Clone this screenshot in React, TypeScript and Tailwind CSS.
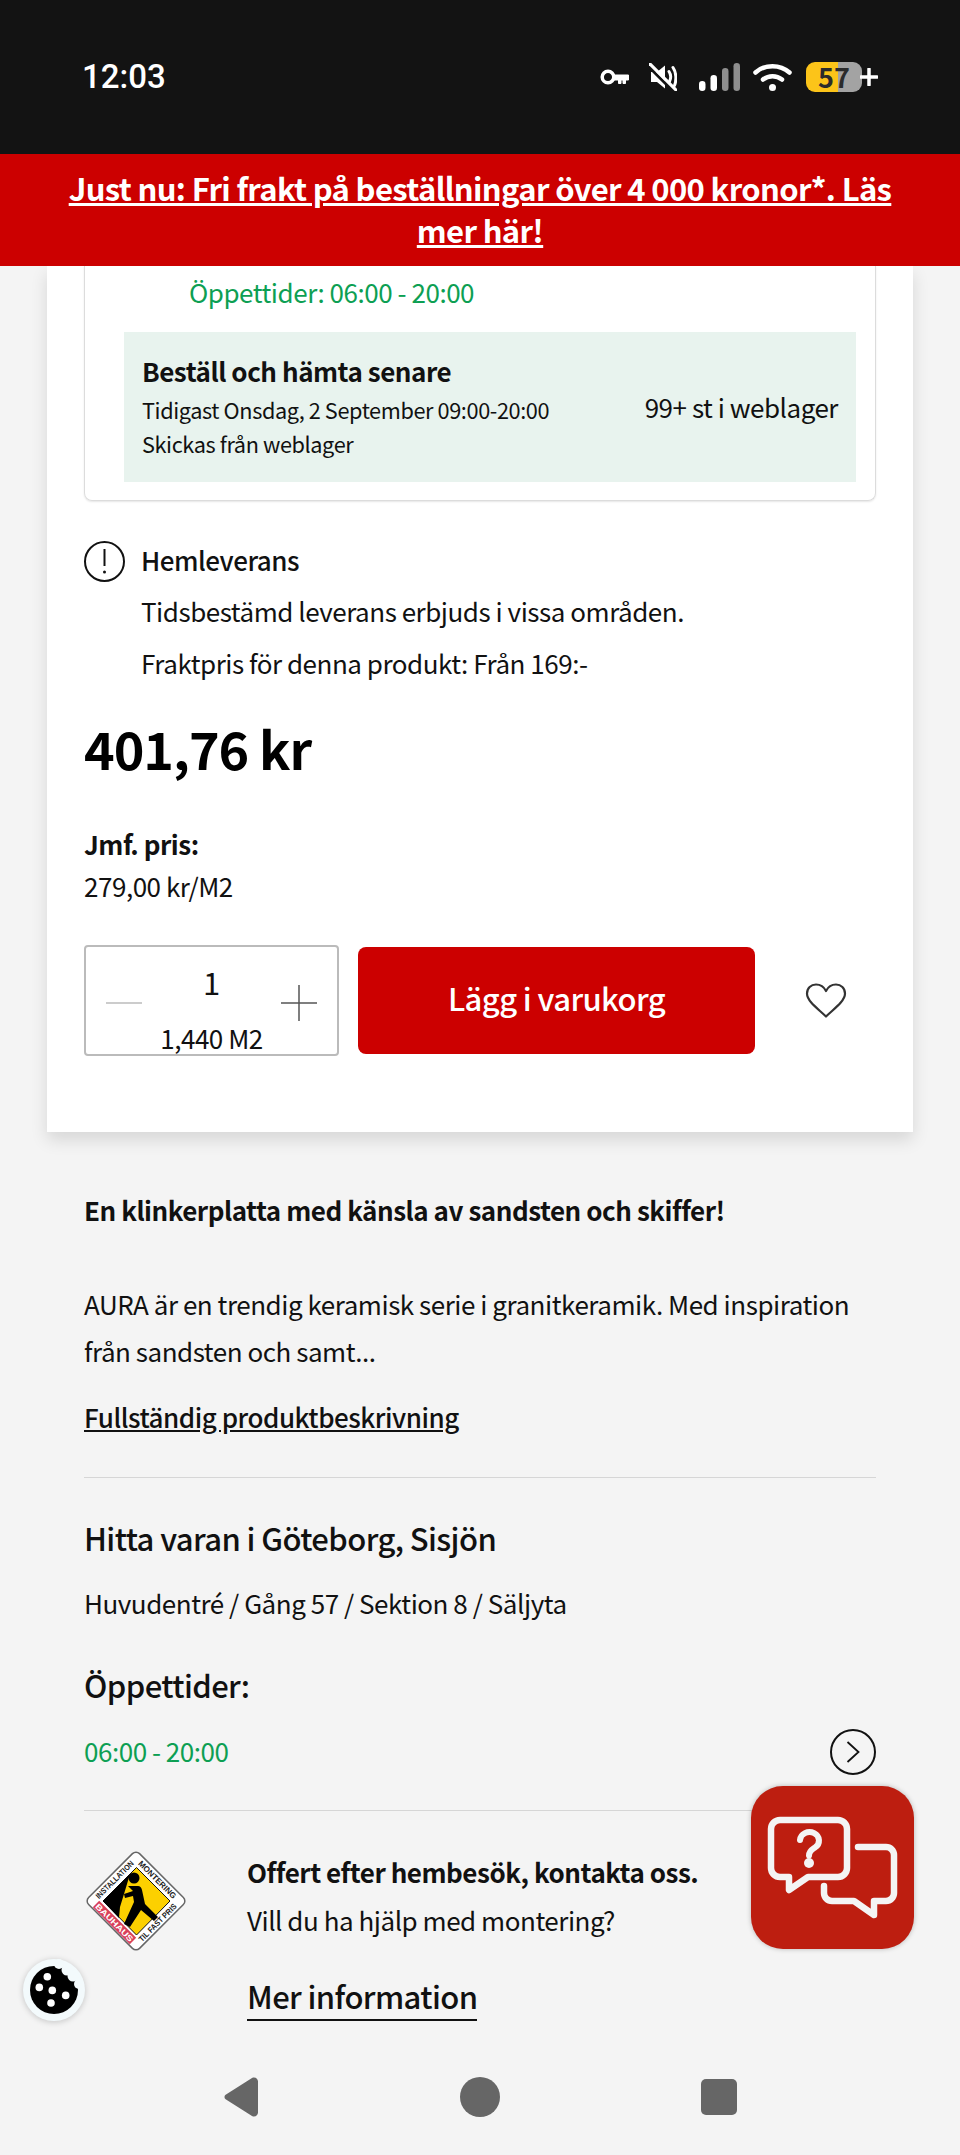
const GREEN = "text-[#0d9f53]";
const BODY = "text-[26px] leading-[40px] tracking-[-0.47px]";
const HEADING = "text-[31px] leading-[44px] tracking-[-0.6px] font-medium";
const SMALL = "text-[21.700px] leading-[34px] tracking-[-0.39px]";

const KeyIcon = () => (
  <svg width="30" height="18" viewBox="0 0 30 18" fill="none" stroke="#fff" strokeWidth="3.500">
    <circle cx="8" cy="9" r="5.800" />
    <path d="M14 7h14.500v5h-3v3.500h-2.500v-3.500h-2v3.500h-2.500v-3.500h-4.500" fill="#fff" strokeWidth="1" strokeLinejoin="round" />
  </svg>
);

const MuteIcon = () => (
  <svg width="28" height="28" viewBox="0 0 28 28" fill="none">
    <path d="M2 9h6l8-6.500v23L8 19H2z" fill="#fff" />
    <path d="M20 8.500c2 3 2 7 .5 10M24 4.500c3.500 5 3.500 13 1.500 18" stroke="#fff" strokeWidth="3" strokeLinecap="round" />
    <path d="M1 5l23 23" stroke="#131313" strokeWidth="3" />
    <path d="M1 1l26 26" stroke="#fff" strokeWidth="3.200" strokeLinecap="round" />
  </svg>
);

const SignalIcon = () => (
  <svg width="41" height="28" viewBox="0 0 41 28">
    <rect x="0" y="18" width="6.500" height="10" rx="3.200" fill="#fff" />
    <rect x="11.500" y="12" width="6.500" height="16" rx="3.200" fill="#fff" />
    <rect x="23" y="5" width="6.500" height="23" rx="3.200" fill="#8e8e8e" />
    <rect x="34.500" y="0" width="6.500" height="28" rx="3.200" fill="#8e8e8e" />
  </svg>
);

const WifiIcon = () => (
  <svg width="39" height="28" viewBox="0 0 39 28" fill="none" stroke="#fff" strokeWidth="4.500" strokeLinecap="round">
    <path d="M2.500 9.500C12 1 27 1 36.500 9.500" />
    <path d="M10 16.500c5.500-4.500 13.500-4.500 19 0" />
    <circle cx="19.500" cy="24.500" r="3.500" fill="#fff" stroke="none" />
  </svg>
);

const Heart = () => (
  <svg width="42" height="36" viewBox="0 0 42 36" fill="none" stroke="#333" strokeWidth="2.200" strokeLinejoin="round">
    <path d="M21 33.500C14 26.500 2 18.500 2 10.500 2 5 6 1.500 11 1.500c4.500 0 8 2.500 10 6.500 2-4 5.500-6.500 10-6.500 5 0 9 3.500 9 9 0 8-12 16-19 23z" />
  </svg>
);

const ChatButton = () => (
  <div className="absolute left-[751px] top-[1786px] h-[163px] w-[163px] rounded-[32px] bg-[#bd1e10] shadow-[0_0_5px_rgba(0,0,0,0.25)]">
    <svg width="163" height="163" viewBox="0 0 163 163" fill="none" stroke="#f4f4f4" strokeWidth="6.500" strokeLinejoin="round" strokeLinecap="round">
      <path d="M29 34h58a9 9 0 0 1 9 9v39a9 9 0 0 1-9 9H57l-19 13V91h-9a9 9 0 0 1-9-9V43a9 9 0 0 1 9-9z" />
      <path d="M107 61h28a8 8 0 0 1 8 8v38a8 8 0 0 1-8 8h-12v14l-20-14H81a8 8 0 0 1-8-8v-7" />
      <path d="M49 54a9.500 8.500 0 1 1 15 7.500c-3 2-6 3.500-6 8" strokeWidth="6" />
      <circle cx="58" cy="77" r="5" fill="#f4f4f4" stroke="none" />
    </svg>
  </div>
);

const CookieButton = () => (
  <div className="absolute left-[23px] top-[1959px] h-[62px] w-[62px] rounded-full bg-[#f3fafc] shadow-[0_1px_6px_rgba(0,0,0,0.2)]">
    <svg width="62" height="62" viewBox="0 0 62 62">
      <circle cx="31" cy="31" r="24" fill="#000" />
      <g fill="#f3fafc">
        <circle cx="36" cy="5" r="5" />
        <circle cx="44" cy="11" r="5.500" />
        <circle cx="50" cy="17" r="5.500" />
        <circle cx="56" cy="25" r="5" />
      </g>
      <g fill="#fff">
        <circle cx="24.300" cy="17.700" r="3.800" />
        <circle cx="16.300" cy="28.400" r="3.800" />
        <circle cx="29.300" cy="31.400" r="3.800" />
        <circle cx="42.700" cy="36.400" r="3.800" />
        <circle cx="28" cy="44" r="3.800" />
      </g>
    </svg>
  </div>
);

const MountingLogo = () => (
  <svg width="104" height="104" viewBox="0 0 104 104" className="shrink-0">
    <rect x="16" y="16" width="72" height="72" rx="5" transform="rotate(45 52 52)" fill="#fff" stroke="#666" strokeWidth="1.500" />
    <path d="M52.500 18.500l33.500 33.500-33.500 34-33.500-34z" fill="#fcd000" stroke="#111" strokeWidth="1" />
    <path d="M19 52l27-27-6 20-4 13-1 11z" fill="#000" />
    <circle cx="50" cy="29" r="5.500" fill="#000" />
    <path d="M44 37h10q3 0 4 4l3 14 13 13-4 4-13-11-11 17-6-3 10-22-1-6-8 2-1-4 9-3z" fill="#000" />
    <path d="M15.200 51.800l37 37-6.400 6.400-37-37z" fill="#d9405a" />
    <g fontFamily="'Liberation Sans',sans-serif" fontWeight="700" fontSize="8" textAnchor="middle" lengthAdjust="spacingAndGlyphs">
      <text x="32.600" y="32.600" transform="rotate(-45 32.600 32.600)" textLength="50" lengthAdjust="spacingAndGlyphs" fill="#222">INSTALLATION</text>
      <text x="71.400" y="32.600" transform="rotate(45 71.400 32.600)" textLength="50" lengthAdjust="spacingAndGlyphs" fill="#222">MONTERING</text>
      <text x="75.600" y="75.600" transform="rotate(-45 75.600 75.600)" textLength="50" lengthAdjust="spacingAndGlyphs" fill="#222">TIL FAST PRIS</text>
      <text x="28.400" y="75.600" transform="rotate(45 28.400 75.600)" textLength="50" lengthAdjust="spacingAndGlyphs" fill="#fff">BAUHAUS</text>
    </g>
  </svg>
);

export default function App() {
  return (
    <div className="relative flex h-[2155px] w-[960px] flex-col overflow-hidden bg-[#f4f4f4] font-['Noto_Sans_CJK_SC',sans-serif] text-[#111]">
      {/* status bar */}
      <div className="flex h-[154px] shrink-0 items-center justify-between bg-[#131313] px-[82px]">
        <span className="font-['Roboto',sans-serif] text-[33px] font-medium text-white">12:03</span>
        <div className="flex items-center">
          <KeyIcon />
          <div className="ml-[19px]"><MuteIcon /></div>
          <div className="ml-[22px]"><SignalIcon /></div>
          <div className="ml-[13px]"><WifiIcon /></div>
          <div className="ml-[14px] flex h-[30px] w-[56px] items-center justify-center rounded-[9px] bg-[linear-gradient(90deg,#fcc419_57%,#a3a3a3_57%)] text-[27px] font-bold leading-[30px] text-[#2b2b2b]">57</div>
          <svg width="18" height="18" viewBox="0 0 18 18" className="-ml-[2px]">
            <path d="M9 1v16M1 9h16" stroke="#fff" strokeWidth="3.500" strokeLinecap="round" />
          </svg>
        </div>
      </div>

      {/* promo banner */}
      <div className="shrink-0 bg-[#cc0000] px-[60px] pb-[15px] pt-[13px] text-center text-[31px] font-bold leading-[42px] tracking-[-0.65px] text-white">
        <a className="underline">Just nu: Fri frakt på beställningar över 4 000 kronor*. Läs mer här!</a>
      </div>

      <div className="min-h-0 flex-1 overflow-hidden">
        {/* product card */}
        <div className="mx-[47px] bg-white px-[37px] pb-[76px] shadow-[0_8px_16px_rgba(0,0,0,0.12)]">
          <div className="rounded-b-lg border border-t-0 border-[#dcdcdc] pb-[18px] pt-[6px] shadow-[0_1px_2px_rgba(0,0,0,0.1)]">
            <p className={`pl-[104px] ${BODY} ${GREEN}`}>Öppettider: 06:00 - 20:00</p>
            <div className="ml-[39px] mr-[19px] mt-[20px] flex h-[150px] items-center justify-between bg-[#e8f3ee] px-[18px]">
              <div className="pb-[3px]">
                <p className={`${BODY} font-bold`}>Beställ och hämta senare</p>
                <p className={`mt-[2px] ${SMALL}`}>Tidigast Onsdag, 2 September 09:00-20:00</p>
                <p className={SMALL}>Skickas från weblager</p>
              </div>
              <p className={BODY}>99+ st i weblager</p>
            </div>
          </div>

          <div className="mt-[40px] flex items-center gap-[16px]">
            <svg width="41" height="41" viewBox="0 0 41 41" fill="none" stroke="#111" strokeWidth="2">
              <circle cx="20.500" cy="20.500" r="19.500" />
              <path d="M20.500 8v17" />
              <circle cx="20.500" cy="31" r="1.500" fill="#111" stroke="none" />
            </svg>
            <p className={`${BODY} -mt-[3px] font-medium`}>Hemleverans</p>
          </div>
          <p className={`mt-[9px] pl-[57px] ${BODY}`}>Tidsbestämd leverans erbjuds i vissa områden.</p>
          <p className={`mt-[12px] pl-[57px] ${BODY}`}>Fraktpris för denna produkt: Från 169:-</p>
          <p className="mt-[33px] text-[52px] font-bold leading-[64px] tracking-[-1px] text-black">401,76 kr</p>
          <p className={`mt-[44px] ${BODY} font-bold`}>Jmf. pris:</p>
          <p className={`mt-[2px] ${BODY}`}>279,00 kr/M2</p>

          <div className="mt-[39px] flex items-center">
            <div className="flex h-[111px] w-[255px] items-center justify-between rounded-[4px] border-2 border-[#bbb] px-[20px]">
              <svg width="36" height="2" className="mt-[4px]"><rect width="36" height="2" fill="#ccc" /></svg>
              <div className="pt-[18px] text-center">
                <p className="text-[31px] leading-[40px]">1</p>
                <p className={`mt-[16px] whitespace-nowrap ${BODY} leading-[34px]`}>1,440 M2</p>
              </div>
              <svg width="36" height="36" viewBox="0 0 36 36" className="mt-[4px]"><path d="M18 0v36M0 18h36" stroke="#555" strokeWidth="1.500" /></svg>
            </div>
            <button className="ml-[19px] h-[107px] w-[397px] rounded-[8px] bg-[#cc0000] pb-[4px] text-[31px] font-medium tracking-[-0.6px] text-white">Lägg i varukorg</button>
            <div className="ml-[50px]"><Heart /></div>
          </div>
        </div>

        {/* description */}
        <div className="px-[84px]">
          <p className={`mt-[58px] ${BODY} font-bold`}>En klinkerplatta med känsla av sandsten och skiffer!</p>
          <p className={`mt-[50px] ${BODY} leading-[47px]`}>AURA är en trendig keramisk serie i granitkeramik. Med inspiration från sandsten och samt...</p>
          <a className={`mt-[23px] block ${BODY} font-medium underline`}>Fullständig produktbeskrivning</a>
          <div className="mt-[40px] h-px bg-[#d6d6d6]" />
          <p className={`mt-[38px] ${HEADING}`}>Hitta varan i Göteborg, Sisjön</p>
          <p className={`mt-[23px] ${BODY}`}>Huvudentré / Gång 57 / Sektion 8 / Säljyta</p>
          <p className={`mt-[40px] ${HEADING}`}>Öppettider:</p>
          <div className="mt-[22px] flex h-[45px] items-center justify-between">
            <span className={`-mt-[2px] ${BODY} ${GREEN}`}>06:00 - 20:00</span>
            <svg width="46" height="46" viewBox="0 0 46 46" fill="none" stroke="#111" strokeWidth="2">
              <circle cx="23" cy="23" r="22" />
              <path d="M17.500 13l11 10-11 10" strokeWidth="1.800" />
            </svg>
          </div>
          <div className="mt-[36px] h-px bg-[#d6d6d6]" />
          <div className="flex">
            <div className="mt-[38px]"><MountingLogo /></div>
            <div className="ml-[59px] pt-[41px]">
              <p className={`${BODY} font-bold`}>Offert efter hembesök, kontakta oss.</p>
              <p className={`mt-[8px] ${BODY}`}>Vill du ha hjälp med montering?</p>
              <a className={`mt-[34px] inline-block border-b-2 border-[#111] pb-[1px] ${HEADING}`}>Mer information</a>
            </div>
          </div>
        </div>
      </div>

      {/* android nav */}
      <div className="flex h-[115px] shrink-0 items-center justify-center gap-[201px] bg-[#f4f4f4] pb-[1px]">
        <svg width="36" height="40" viewBox="0 0 36 40">
          <path d="M3 17.500L29 1c3-1.500 6 .5 6 3.500v31c0 3-3 5-6 3.500L3 22.500c-2-1.200-2-3.800 0-5z" fill="#666" />
        </svg>
        <div className="h-[40px] w-[40px] rounded-full bg-[#666]" />
        <div className="h-[36px] w-[36px] rounded-[5px] bg-[#666]" />
      </div>

      <ChatButton />
      <CookieButton />
    </div>
  );
}
